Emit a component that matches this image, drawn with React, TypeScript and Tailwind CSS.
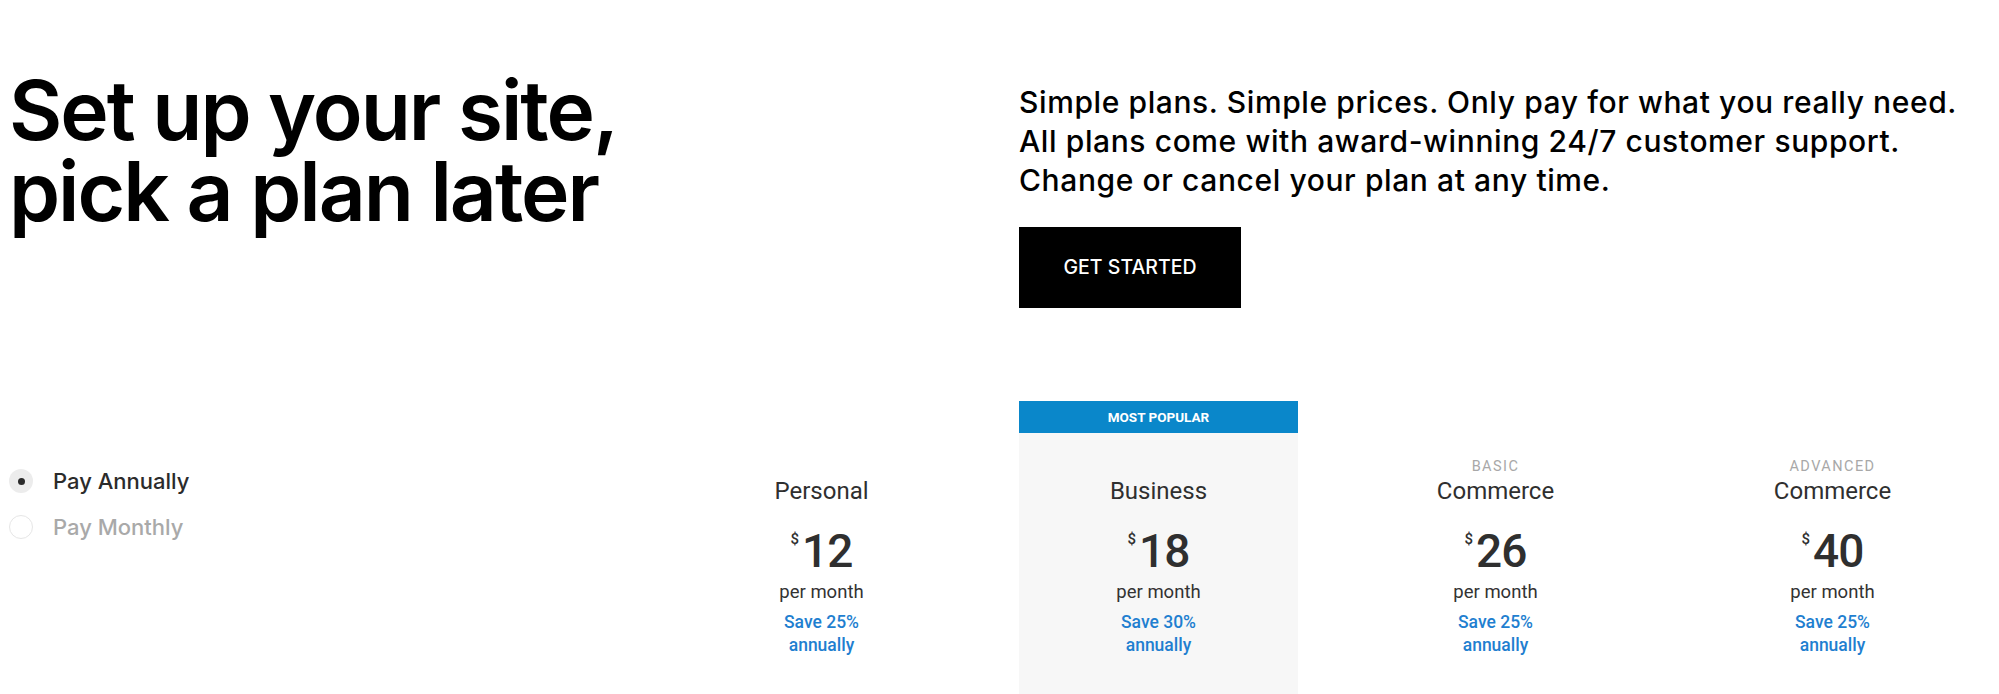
const PLANS = [
  { label: "", name: "Personal", price: "12", save: "Save 25%", popular: false },
  { label: "", name: "Business", price: "18", save: "Save 30%", popular: true },
  { label: "BASIC", name: "Commerce", price: "26", save: "Save 25%", popular: false },
  { label: "ADVANCED", name: "Commerce", price: "40", save: "Save 25%", popular: false },
];

function Radio({ checked, text }: { checked: boolean; text: string }) {
  return (
    <div className="flex items-center h-[46px]">
      {checked ? (
        <span className="flex h-[24px] w-[24px] items-center justify-center rounded-full bg-[#ececec]">
          <span className="h-[7px] w-[7px] rounded-full bg-[#2a2a2a]" />
        </span>
      ) : (
        <span className="h-[24px] w-[24px] rounded-full border border-[#e6e6e6] bg-white" />
      )}
      <span
        className={
          "ml-[20px] font-['Inter',sans-serif] text-[22px] font-medium leading-none " +
          (checked ? "text-[#2b2b2b]" : "text-[#a9a9a9]")
        }
      >
        {text}
      </span>
    </div>
  );
}

function PlanColumn({ plan }: { plan: (typeof PLANS)[number] }) {
  return (
    <div
      className={
        "flex w-[279px] flex-col items-center pb-[60px] font-['Roboto',sans-serif] " +
        (plan.popular ? "bg-[#f7f7f7]" : "")
      }
    >
      <div
        className={
          "flex h-[32px] w-full items-center justify-center text-[13.5px] font-bold text-white " +
          (plan.popular ? "bg-[#0a87ca]" : "")
        }
      >
        {plan.popular ? "MOST POPULAR" : ""}
      </div>
      <div className="mt-[25px] h-[18px] text-[14.5px] leading-[18px] tracking-[0.1em] text-[#a8a8a8]">
        {plan.label}
      </div>
      <div className="h-[30px] text-[24px] leading-[30px] text-[#2f2f2f]">{plan.name}</div>
      <div className="mt-[20px] flex items-start text-[#2f2f2f]">
        <span className="mr-[3px] mt-[6px] text-[15px] font-medium leading-none">$</span>
        <span className="text-[46px] font-medium leading-[50px] tracking-[-0.02em]">{plan.price}</span>
      </div>
      <div className="mt-[4px] text-[18.5px] leading-[24px] text-[#333]">per month</div>
      <div className="mt-[7px] flex flex-col items-center text-[17.5px] font-medium leading-[23px] text-[#1f7fd0]">
        <span>{plan.save}</span>
        <span>annually</span>
      </div>
    </div>
  );
}

export default function App() {
  return (
    <div className="h-[694px] w-[1999px] overflow-hidden bg-white font-['Inter',sans-serif] text-black">
      <div className="flex items-start pt-[70px]">
        <h1 className="w-[1019px] pl-[9px] text-[82px] font-semibold leading-[81px] tracking-[-0.025em]">
          Set up your site,
          <br />
          pick a plan later
        </h1>
        <div className="flex flex-col pt-[13px]">
          <p className="text-[30px] font-medium leading-[39px] tracking-[0.02em]">
            Simple plans. Simple prices. Only pay for what you really need.
            <br />
            All plans come with award-winning 24/7 customer support.
            <br />
            Change or cancel your plan at any time.
          </p>
          <button className="mt-[27px] flex h-[81px] w-[222px] items-center justify-center bg-black text-[19.5px] font-medium text-white">
            GET STARTED
          </button>
        </div>
      </div>

      <div className="mt-[93px] flex items-start">
        <div className="w-[682px] pl-[9px] pt-[57px]">
          <Radio checked text="Pay Annually" />
          <Radio checked={false} text="Pay Monthly" />
        </div>
        <div className="flex gap-[58px]">
          {PLANS.map((p) => (
            <PlanColumn key={p.name + p.price} plan={p} />
          ))}
        </div>
      </div>
    </div>
  );
}
